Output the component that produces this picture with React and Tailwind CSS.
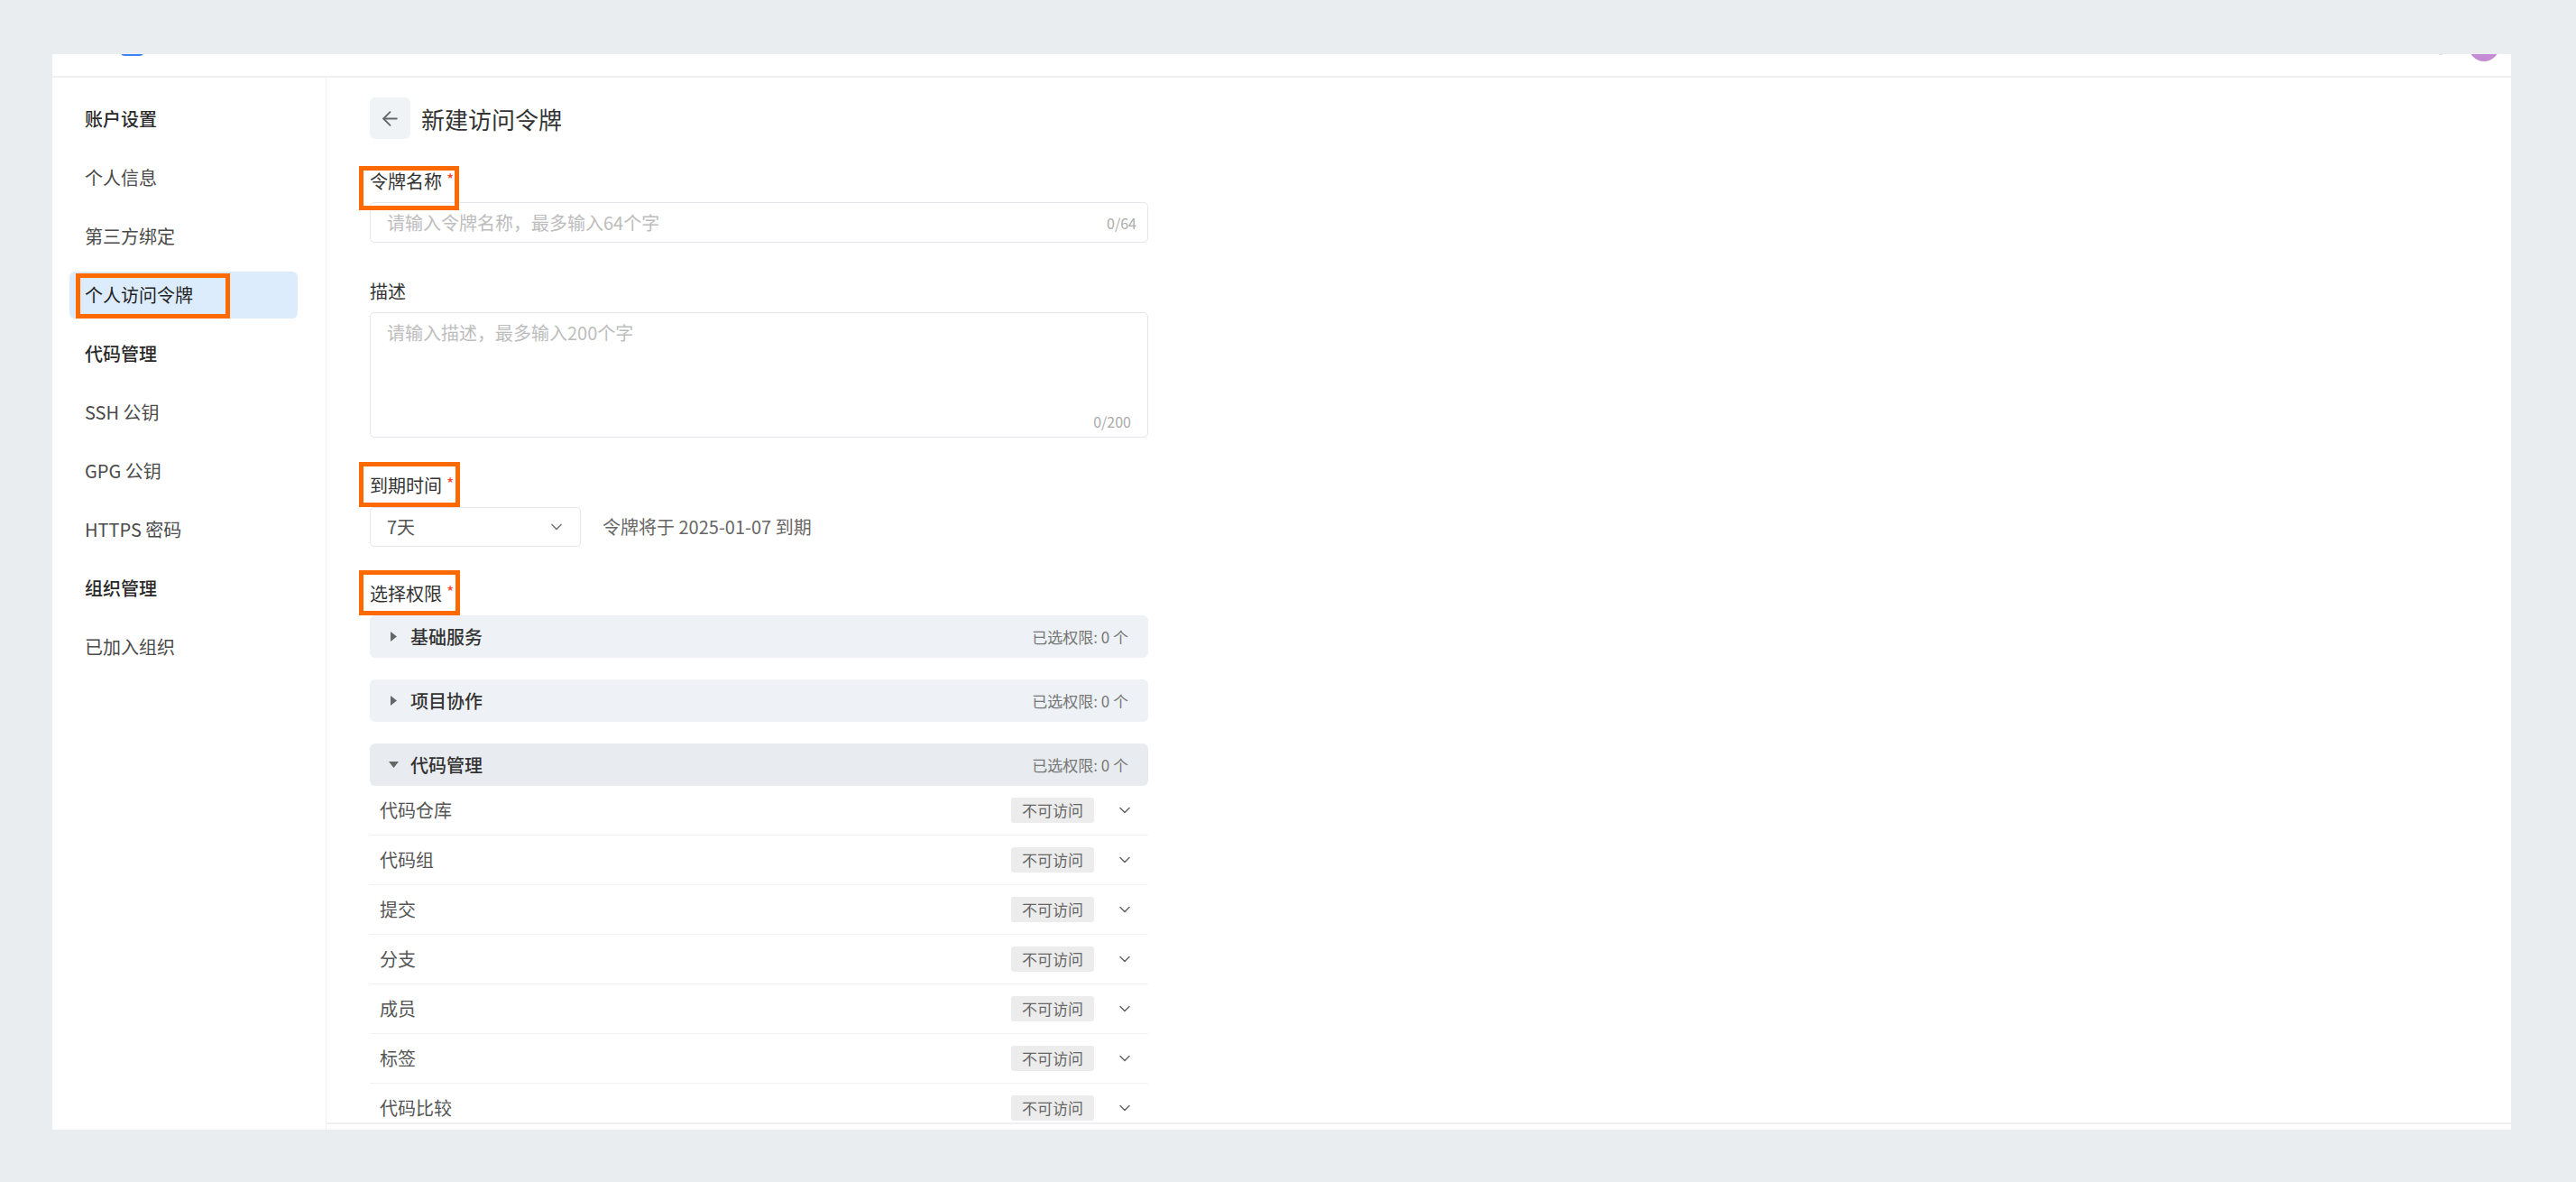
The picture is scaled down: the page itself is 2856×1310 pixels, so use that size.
import React from 'react';
import { ArrowLeft, ChevronDown } from 'lucide-react';

const menu = [
  { label: '账户设置', head: true },
  { label: '个人信息' },
  { label: '第三方绑定' },
  { label: '个人访问令牌', active: true },
  { label: '代码管理', head: true },
  { label: 'SSH 公钥' },
  { label: 'GPG 公钥' },
  { label: 'HTTPS 密码' },
  { label: '组织管理', head: true },
  { label: '已加入组织' },
];

const groups = [
  { title: '基础服务', open: false },
  { title: '项目协作', open: false },
  { title: '代码管理', open: true },
];

const rows = ['代码仓库', '代码组', '提交', '分支', '成员', '标签', '代码比较'];

// orange annotation frame drawn over a label
const Mark = ({ className }) => (
  <div className={`absolute border-[5px] border-[#ff6a00] pointer-events-none ${className}`} />
);

const Label = ({ text, required, mark }) => (
  <div className="relative h-[26px] flex items-center text-[20px] leading-[26px] text-[#333]">
    {text}
    {required && <span className="ml-[5px] text-[#f5462d] text-[18px] -mt-[6px]">*</span>}
    {mark && <Mark className={mark} />}
  </div>
);

const Caret = ({ open }) =>
  open ? (
    <svg width="11" height="7" viewBox="0 0 11 7">
      <path d="M0 0h11L5.5 7z" fill="#666" />
    </svg>
  ) : (
    <svg width="7" height="11" viewBox="0 0 7 11">
      <path d="M0 0l7 5.5L0 11z" fill="#666" />
    </svg>
  );

const App = () => {
  return (
    <div className="min-h-screen bg-[#e9edf0] pt-[60px] pl-[58px] pr-[72px] pb-[58px] font-['Noto_Sans_CJK_SC','Noto_Sans',sans-serif]">
      <div className="bg-white h-[1192px] flex flex-col overflow-hidden">
        {/* ===== TOP BAR (scrolled, mostly cut) ===== */}
        <div className="relative h-[26px] shrink-0 border-b-2 border-[#eef0f3] overflow-hidden">
          <div className="absolute left-[76px] -top-[20px] w-[25px] h-[22px] rounded-[4px] bg-[#3b82f6]" />
          <div className="absolute left-[2645px] -top-[10px] w-[6px] h-[11px] rounded-full bg-[#d4d7dc]" />
          <div className="absolute left-[2679px] -top-[26px] w-[34px] h-[34px] rounded-full bg-[#c58bd3]" />
        </div>

        <div className="flex flex-1 min-h-0">
          {/* ===== SIDEBAR ===== */}
          <div className="w-[304px] shrink-0 border-r border-[#eef0f3] pt-[20px] pl-[19px] pr-[31px]">
            {menu.map((m) => (
              <div
                key={m.label}
                className={`relative h-[52px] mb-[13px] flex items-center pl-[17px] rounded-[6px] text-[20px] ${
                  m.active ? 'bg-[#dcecfc] text-[#222]' : m.head ? 'text-[#2a2a2a] font-medium' : 'text-[#4a4a4a]'
                }`}
              >
                {m.label}
                {m.active && <Mark className="left-[7px] top-[2px] w-[171px] h-[50px]" />}
              </div>
            ))}
          </div>

          {/* ===== MAIN ===== */}
          <div className="flex-1 flex flex-col min-w-0">
            <div className="flex-1 overflow-hidden pl-[48px] pt-[22px]">
              <div className="w-[863px]">
                <div className="flex items-center h-[46px]">
                  <div className="w-[45px] h-[46px] rounded-[6px] bg-[#f0f3f6] flex items-center justify-center">
                    <ArrowLeft size={25} strokeWidth={1.8} color="#666" />
                  </div>
                  <span className="ml-[12px] text-[26px] text-[#333]">新建访问令牌</span>
                </div>

                <div className="mt-[34px]">
                  <Label text="令牌名称" required mark="-left-[12px] -top-[4px] w-[111px] h-[49px]" />
                  <div className="mt-[10px] h-[45px] border border-[#e3e6ea] rounded-[5px] flex items-center justify-between pl-[18px] pr-[12px]">
                    <span className="text-[20px] text-[#bdbdbd]">请输入令牌名称，最多输入64个字</span>
                    <span className="text-[16px] text-[#aaa]">0/64</span>
                  </div>
                </div>

                <div className="mt-[41px]">
                  <Label text="描述" />
                  <div className="mt-[10px] h-[139px] border border-[#e3e6ea] rounded-[5px] flex flex-col justify-between pl-[18px] pr-[18px] pt-[9px] pb-[5px]">
                    <span className="text-[20px] leading-[26px] text-[#bdbdbd]">请输入描述，最多输入200个字</span>
                    <span className="self-end text-[16px] text-[#aaa]">0/200</span>
                  </div>
                </div>

                <div className="mt-[40px]">
                  <Label text="到期时间" required mark="-left-[12px] -top-[13px] w-[112px] h-[50px]" />
                  <div className="mt-[11px] flex items-center">
                    <div className="w-[234px] h-[44px] border border-[#e3e6ea] rounded-[5px] flex items-center justify-between pl-[18px] pr-[16px]">
                      <span className="text-[20px] text-[#555]">7天</span>
                      <ChevronDown size={20} strokeWidth={2} color="#777" />
                    </div>
                    <span className="ml-[24px] text-[20px] text-[#666]">令牌将于 2025-01-07 到期</span>
                  </div>
                </div>

                <div className="mt-[39px]">
                  <Label text="选择权限" required mark="-left-[12px] -top-[13px] w-[112px] h-[50px]" />
                  <div className="mt-[11px] flex flex-col">
                    {groups.map((g, i) => (
                      <div key={g.title} className={i > 0 ? 'mt-[24px]' : ''}>
                        <div
                          className={`h-[47px] rounded-[6px] flex items-center justify-between pl-[20px] pr-[22px] ${
                            g.open ? 'bg-[#e8ebef]' : 'bg-[#eef2f6]'
                          }`}
                        >
                          <div className="flex items-center">
                            <div className="w-[12px] flex justify-center">
                              <Caret open={g.open} />
                            </div>
                            <span className="ml-[13px] text-[20px] font-medium text-[#333]">{g.title}</span>
                          </div>
                          <span className="text-[17px] text-[#777]">已选权限: 0 个</span>
                        </div>
                        {g.open &&
                          rows.map((r) => (
                            <div
                              key={r}
                              className="h-[55px] border-b border-[#eff1f3] flex items-center justify-between pl-[11px] pr-[16px]"
                            >
                              <span className="text-[20px] text-[#555]">{r}</span>
                              <div className="flex items-center">
                                <span className="w-[92px] h-[28px] rounded-[3px] bg-[#ececec] flex items-center justify-center text-[17px] text-[#666]">
                                  不可访问
                                </span>
                                <ChevronDown className="ml-[24px]" size={20} strokeWidth={1.8} color="#666" />
                              </div>
                            </div>
                          ))}
                      </div>
                    ))}
                  </div>
                </div>
              </div>
            </div>
            <div className="h-[8px] shrink-0 border-t-2 border-[#eef0f3]" />
          </div>
        </div>
      </div>
    </div>
  );
};

export default App;
